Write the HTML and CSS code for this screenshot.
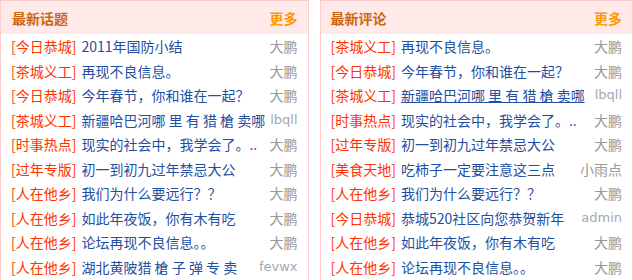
FILE: index.html
```html
<!DOCTYPE html>
<html lang="zh-CN">
<head>
<meta charset="utf-8">
<link rel="stylesheet" href="styles.css">
</head>
<body>
<div class="wrap">
  <div class="panel panel-left">
    <div class="head"><span class="title">最新话题</span><a class="more">更多</a></div>
    <ul class="list">
      <li><span class="cat">[今日恭城]</span><span class="txt">2011年国防小结</span><span class="au">大鹏</span></li>
      <li><span class="cat">[茶城义工]</span><span class="txt">再现不良信息。</span><span class="au">大鹏</span></li>
      <li><span class="cat">[今日恭城]</span><span class="txt">今年春节，你和谁在一起？</span><span class="au">大鹏</span></li>
      <li><span class="cat">[茶城义工]</span><span class="txt">新疆哈巴河哪 里 有 猎 槍 卖哪</span><span class="au lat">lbqll</span></li>
      <li><span class="cat">[时事热点]</span><span class="txt">现实的社会中，我学会了。<span class="dots">..</span></span><span class="au">大鹏</span></li>
      <li><span class="cat">[过年专版]</span><span class="txt">初一到初九过年禁忌大公</span><span class="au">大鹏</span></li>
      <li><span class="cat">[人在他乡]</span><span class="txt">我们为什么要远行？？</span><span class="au">大鹏</span></li>
      <li><span class="cat">[人在他乡]</span><span class="txt">如此年夜饭，你有木有吃</span><span class="au">大鹏</span></li>
      <li><span class="cat">[人在他乡]</span><span class="txt">论坛再现不良信息。。</span><span class="au">大鹏</span></li>
      <li><span class="cat">[人在他乡]</span><span class="txt">湖北黄陂猎 槍 子 弹 专 卖</span><span class="au lat">fevwx</span></li>
    </ul>
  </div>
  <div class="panel panel-right">
    <div class="head"><span class="title">最新评论</span><a class="more">更多</a></div>
    <ul class="list">
      <li><span class="cat">[茶城义工]</span><span class="txt">再现不良信息。</span><span class="au">大鹏</span></li>
      <li><span class="cat">[今日恭城]</span><span class="txt">今年春节，你和谁在一起？</span><span class="au">大鹏</span></li>
      <li><span class="cat">[茶城义工]</span><span class="txt hover">新疆哈巴河哪 里 有 猎 槍 卖哪</span><span class="au lat">lbqll</span></li>
      <li><span class="cat">[时事热点]</span><span class="txt">现实的社会中，我学会了。<span class="dots">..</span></span><span class="au">大鹏</span></li>
      <li><span class="cat">[过年专版]</span><span class="txt">初一到初九过年禁忌大公</span><span class="au">大鹏</span></li>
      <li><span class="cat">[美食天地]</span><span class="txt">吃柿子一定要注意这三点</span><span class="au">小雨点</span></li>
      <li><span class="cat">[人在他乡]</span><span class="txt">我们为什么要远行？？</span><span class="au">大鹏</span></li>
      <li><span class="cat">[今日恭城]</span><span class="txt">恭城520社区向您恭贺新年</span><span class="au lat">admin</span></li>
      <li><span class="cat">[人在他乡]</span><span class="txt">如此年夜饭，你有木有吃</span><span class="au">大鹏</span></li>
      <li><span class="cat">[人在他乡]</span><span class="txt">论坛再现不良信息。。</span><span class="au">大鹏</span></li>
    </ul>
  </div>
</div>
</body>
</html>
```
FILE: styles.css
```css
* { box-sizing: border-box; }
html, body { margin: 0; padding: 0; background: #fff; }
body {
  font-family: "Noto Sans CJK SC", "Liberation Sans", sans-serif;
  font-size: 14px;
  width: 633px;
  height: 280px;
  overflow: hidden;
}
.wrap {
  display: flex;
  align-items: flex-start;
}
.panel {
  border: 1px solid #ffcccc;
  border-bottom: none;
  height: 290px;
  overflow: hidden;
}
.panel-left { width: 309px; }
.panel-right { width: 314px; margin-left: 11px; }
.head {
  height: 33px;
  background: #ffe9e9;
  display: flex;
  align-items: center;
  justify-content: space-between;
  padding: 0 10px 0 10px;
}
.panel-left .head { padding-left: 11px; }
.title {
  font-weight: bold;
  color: #cc6611;
  font-size: 14px;
}
.more {
  font-weight: bold;
  color: #ff9900;
  font-size: 14px;
}
.list {
  list-style: none;
  margin: 0;
  padding: 0 10px;
}
.list li {
  height: 24.5px;
  display: flex;
  align-items: center;
  white-space: nowrap;
  line-height: 24.5px;
}
.cat {
  color: #ff3300;
  flex: none;
}
.txt {
  color: #1f4f9f;
  margin-left: 5px;
  flex: 1;
  overflow: hidden;
}
.txt.hover { text-decoration: underline; }
.dots { color: #7050c0; }
.au {
  color: #999;
  flex: none;
  text-align: right;
}
.au.lat {
  font-family: "DejaVu Sans", "Liberation Sans", sans-serif;
  color: #a4a8b4;
  font-size: 13px;
}
```
